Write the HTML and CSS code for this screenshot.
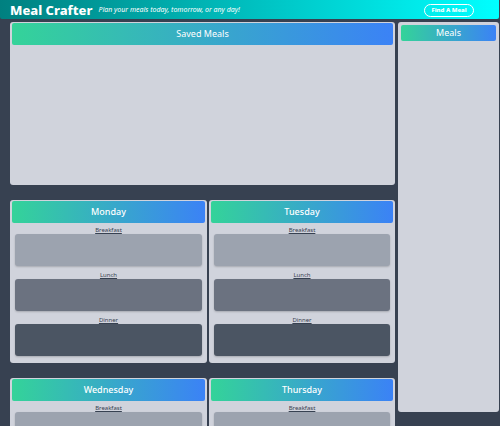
FILE: index.html
```html
<!DOCTYPE html>
<html lang="en">
<head>
<meta charset="utf-8">
<meta name="viewport" content="width=device-width, initial-scale=1">
<title>Meal Crafter</title>
<link rel="stylesheet" href="styles.css">
</head>
<body>
<header class="topbar">
  <h1 class="brand">Meal Crafter</h1>
  <p class="tagline">Plan your meals today, tomorrow, or any day!</p>
  <button class="find" type="button">Find A Meal</button>
</header>
<div class="layout">
  <main class="planner">
    <section class="panel saved">
      <h2 class="title">Saved Meals</h2>
    </section>
    <div class="days">
      <section class="panel day">
        <h2 class="title">Monday</h2>
        <h3 class="label">Breakfast</h3><div class="slot breakfast"></div>
        <h3 class="label">Lunch</h3><div class="slot lunch"></div>
        <h3 class="label">Dinner</h3><div class="slot dinner"></div>
      </section>
      <section class="panel day">
        <h2 class="title">Tuesday</h2>
        <h3 class="label">Breakfast</h3><div class="slot breakfast"></div>
        <h3 class="label">Lunch</h3><div class="slot lunch"></div>
        <h3 class="label">Dinner</h3><div class="slot dinner"></div>
      </section>
      <section class="panel day">
        <h2 class="title">Wednesday</h2>
        <h3 class="label">Breakfast</h3><div class="slot breakfast"></div>
      </section>
      <section class="panel day">
        <h2 class="title">Thursday</h2>
        <h3 class="label">Breakfast</h3><div class="slot breakfast"></div>
      </section>
    </div>
  </main>
  <aside class="panel meals">
    <h2 class="title compact">Meals</h2>
  </aside>
</div>
</body>
</html>
```
FILE: styles.css
```css
* {
  box-sizing: border-box;
  margin: 0;
}

body {
  height: 100vh;
  overflow: hidden;
  background: #374151;
  font-family: "Noto Sans", "Open Sans", sans-serif;
}

.topbar {
  display: flex;
  align-items: center;
  height: 19px;
  margin-right: 1px;
  padding: 1px 25px 0 10px;
  border-radius: 0 0 2px 2px;
  background: linear-gradient(to right, #008080, #00ffff);
  color: #fff;
}

.brand {
  font-size: 13px;
  line-height: 18px;
  font-weight: 800;
}

.tagline {
  margin-left: 6px;
  font-size: 7px;
  line-height: 18px;
  font-style: italic;
}

.find {
  width: 50px;
  height: 13px;
  margin-left: auto;
  padding: 0;
  border: 1px solid #fff;
  border-radius: 7px;
  background: transparent;
  color: #fff;
  font: 800 6px/10px "Noto Sans", "Open Sans", sans-serif;
  white-space: nowrap;
}

.layout {
  display: grid;
  grid-template-columns: 385fr 101fr;
  gap: 3px;
  align-items: start;
  padding: 3px 1px 0 10px;
}

.panel {
  border-radius: 3px;
  background: #d0d3dc;
}

.saved {
  height: 163px;
  padding: 1px 2px;
}

.title {
  border-radius: 2px;
  background: linear-gradient(to right, #34d399, #3b82f6);
  color: #fff;
  font-size: 9px;
  line-height: 22px;
  font-weight: 400;
  text-align: center;
}

.compact {
  line-height: 16px;
}

.days {
  display: grid;
  grid-template-columns: 197fr 186fr;
  gap: 15px 2px;
  margin-top: 15px;
}

.day {
  padding: 1px 2px 7px;
}

.day .title {
  margin-bottom: 3px;
  font-weight: 500;
}

.label {
  color: #374151;
  font-size: 6px;
  line-height: 8px;
  font-weight: 400;
  text-align: center;
  text-decoration: underline;
}

.slot {
  height: 32px;
  margin: 0 3px 5px;
  border-radius: 3px;
  box-shadow: 0 1px 2px rgba(0, 0, 0, 0.2);
}

.slot:last-child {
  margin-bottom: 0;
}

.breakfast {
  background: #9ca3af;
}

.lunch {
  background: #6b7280;
}

.dinner {
  background: #4b5563;
}

.meals {
  height: 390px;
  padding: 3px;
}
```
